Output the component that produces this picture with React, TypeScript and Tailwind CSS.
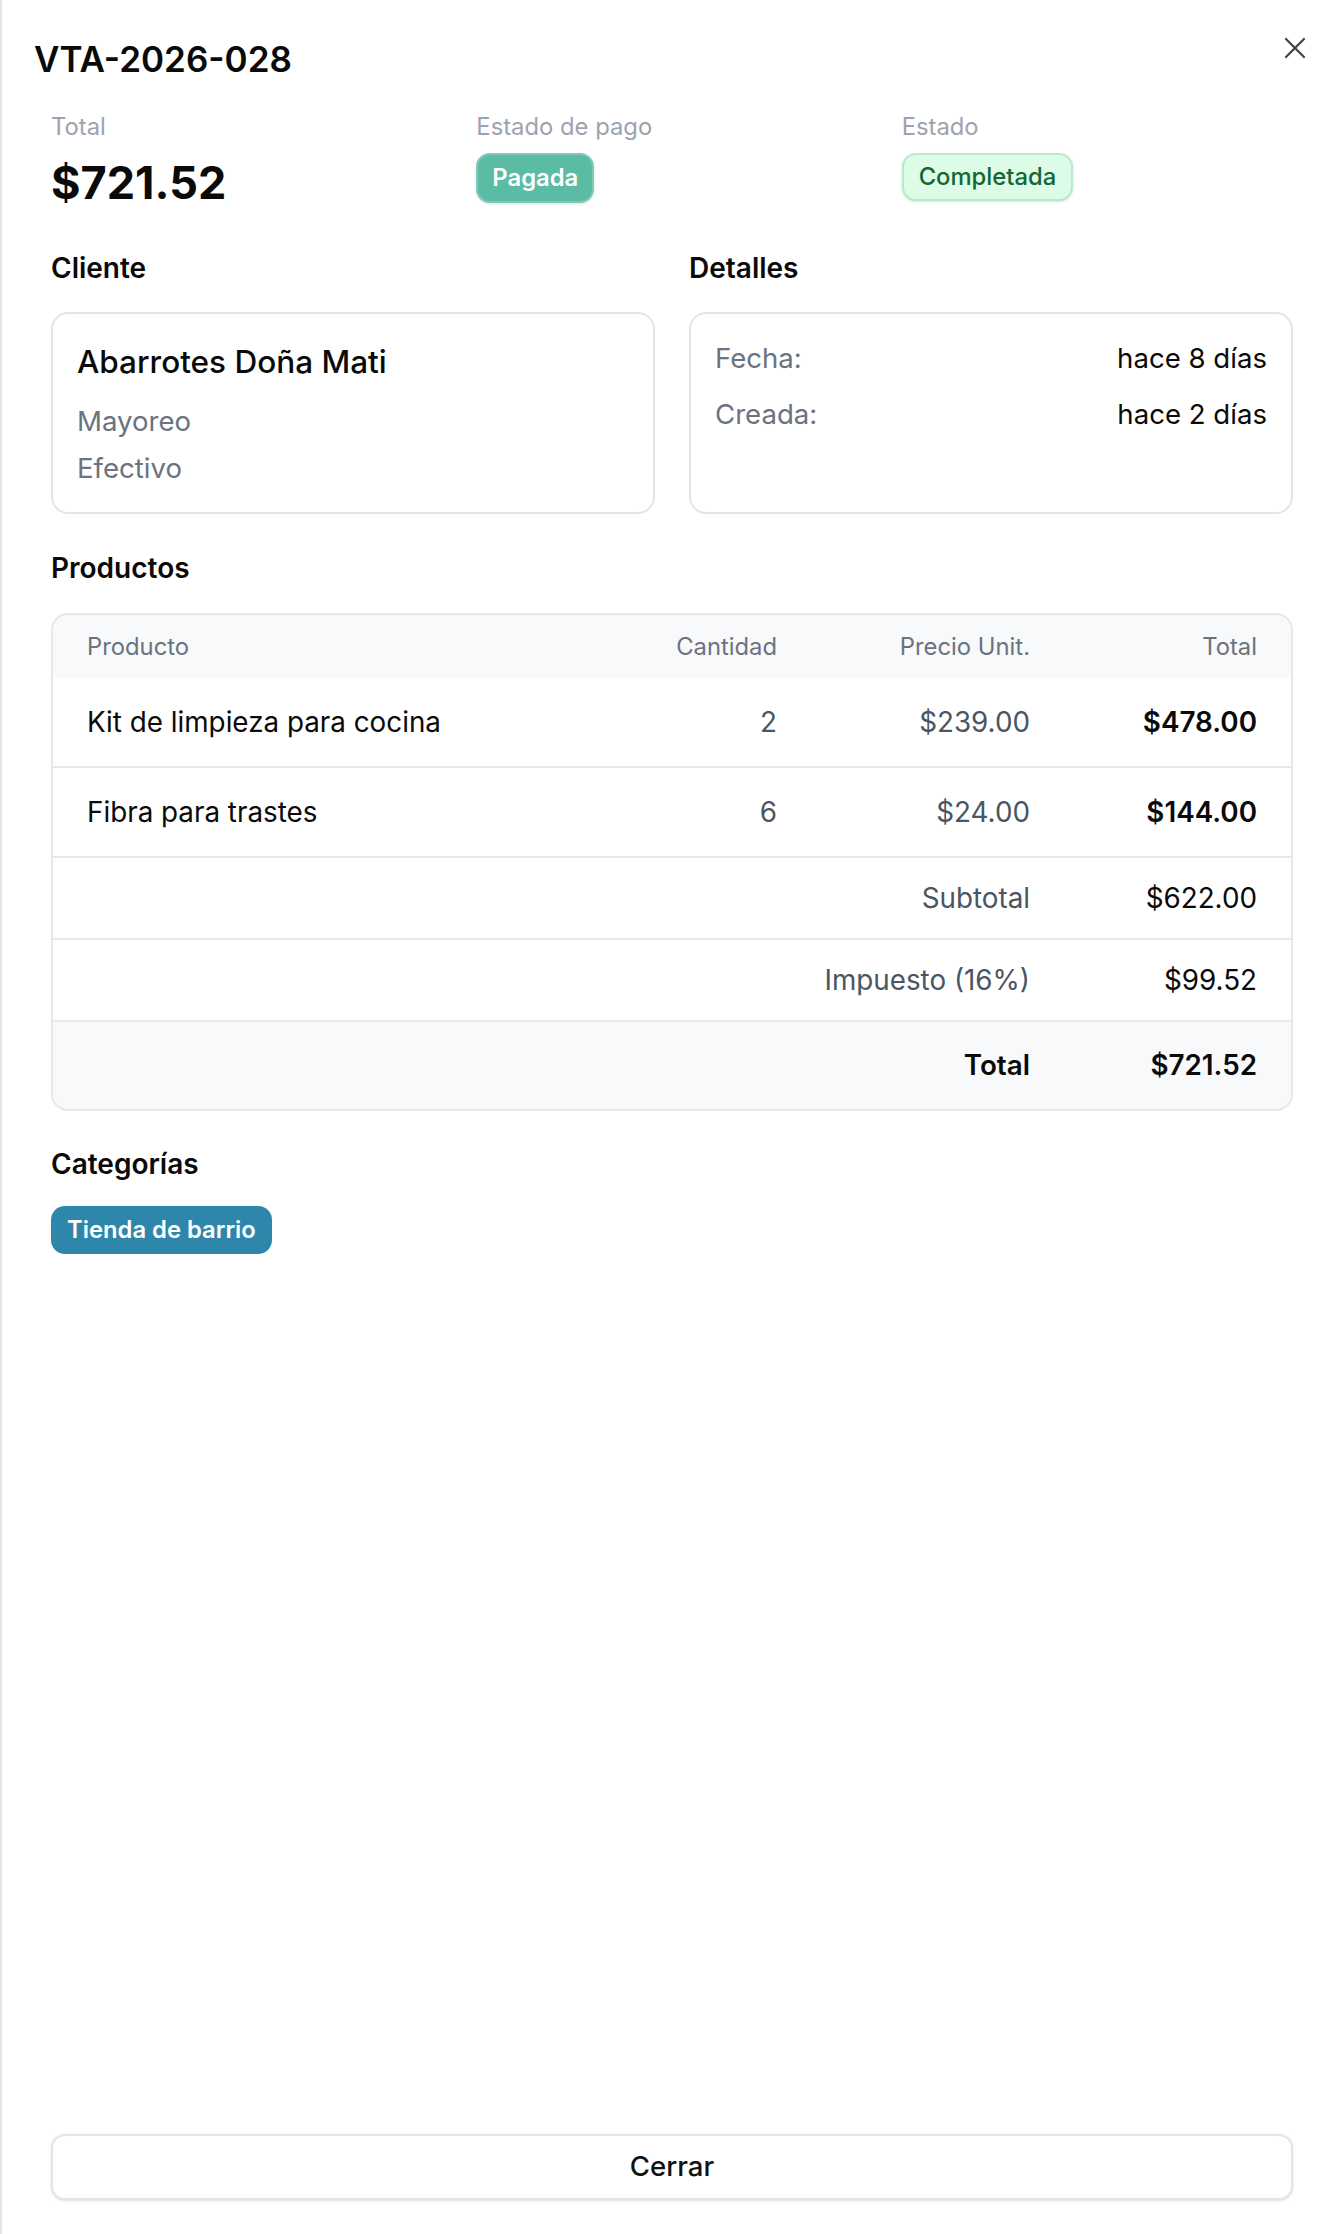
import { X } from 'lucide-react';

const items = [
  { name: 'Kit de limpieza para cocina', qty: 2, price: '$239.00', total: '$478.00' },
  { name: 'Fibra para trastes', qty: 6, price: '$24.00', total: '$144.00' },
];

const font = { fontFamily: 'Inter, "Noto Sans", sans-serif' };

export default function App() {
  return (
    <div
      style={font}
      className="relative flex flex-col h-[2234px] bg-white border-l-2 border-[#e5e5e5] pl-[32px] pr-[34px] text-[#0a0a0a]"
    >
      <button className="absolute top-[30px] right-[31px] text-[#444]">
        <X size={36} strokeWidth={1.5} />
      </button>

      <h2 className="pt-[39px] text-[35px] leading-[41px] font-semibold">VTA-2026-028</h2>

      <div className="flex-1 px-[17px]">
        {/* resumen */}
        <div className="grid grid-cols-3 gap-[34px] mt-[30px]">
          <div>
            <div className="text-[23.8px] leading-[34px] text-[#9ca3af]">Total</div>
            <div className="mt-[11px] text-[45px] leading-[56px] font-bold">$721.52</div>
          </div>
          <div>
            <div className="text-[23.8px] leading-[34px] text-[#9ca3af]">Estado de pago</div>
            <span className="inline-block mt-[9px] px-[14px] py-[6px] rounded-[14px] border-2 border-[#7ccab7] bg-[#5bbba5] text-white text-[23.8px] leading-[34px] font-semibold shadow-sm">
              Pagada
            </span>
          </div>
          <div>
            <div className="text-[23.8px] leading-[34px] text-[#9ca3af]">Estado</div>
            <span className="inline-block mt-[9px] px-[15px] py-[5px] rounded-[14px] border-2 border-[#b5ebc8] bg-[#dcfce7] text-[#166534] text-[23.8px] leading-[34px] font-medium shadow-sm">
              Completada
            </span>
          </div>
        </div>

        {/* cliente y detalles */}
        <div className="grid grid-cols-2 gap-[34px] mt-[37px]">
          <div>
            <h3 className="text-[28px] leading-[41px] font-semibold">Cliente</h3>
            <div className="mt-[23px] h-[202px] rounded-[17px] border-2 border-[#e5e5e5] p-[24px]">
              <div className="text-[31.5px] leading-[47.6px] font-medium">Abarrotes Doña Mati</div>
              <div className="mt-[15px] text-[27.6px] leading-[40.8px] text-[#6b7280]">Mayoreo</div>
              <div className="mt-[7px] text-[27.6px] leading-[40.8px] text-[#6b7280]">Efectivo</div>
            </div>
          </div>
          <div>
            <h3 className="text-[28px] leading-[41px] font-semibold">Detalles</h3>
            <div className="mt-[23px] h-[202px] rounded-[17px] border-2 border-[#e5e5e5] p-[24px] flex flex-col gap-[15px] text-[27.6px] leading-[40.8px]">
              <div className="flex justify-between">
                <span className="text-[#6b7280]">Fecha:</span>
                <span>hace 8 días</span>
              </div>
              <div className="flex justify-between">
                <span className="text-[#6b7280]">Creada:</span>
                <span>hace 2 días</span>
              </div>
            </div>
          </div>
        </div>

        {/* productos */}
        <h3 className="mt-[34px] text-[28px] leading-[41px] font-semibold">Productos</h3>
        <div className="mt-[24px] rounded-[17px] border-2 border-[#e5e7eb] overflow-hidden">
          <table className="w-full table-fixed border-collapse">
            <colgroup>
              <col />
              <col className="w-[170px]" />
              <col className="w-[253px]" />
              <col className="w-[227px]" />
            </colgroup>
            <thead className="bg-[#f8f9fb]">
              <tr className="text-[23.8px] leading-[34px] text-[#6b7280]">
                <th className="px-[34px] py-[14.5px] text-left font-normal">Producto</th>
                <th className="px-[34px] py-[14.5px] text-right font-normal">Cantidad</th>
                <th className="px-[34px] py-[14.5px] text-right font-normal">Precio Unit.</th>
                <th className="px-[34px] py-[14.5px] text-right font-normal">Total</th>
              </tr>
            </thead>
            <tbody className="text-[27.8px] leading-[40.8px]">
              {items.map(it => (
                <tr key={it.name} className="border-b-2 border-[#e5e7eb]">
                  <td className="px-[34px] py-[23.7px] whitespace-nowrap">{it.name}</td>
                  <td className="px-[34px] py-[23.7px] text-right text-[#4b5563]">{it.qty}</td>
                  <td className="px-[34px] py-[23.7px] text-right text-[#4b5563]">{it.price}</td>
                  <td className="px-[34px] py-[23.7px] text-right font-semibold">{it.total}</td>
                </tr>
              ))}
              <tr className="border-b-2 border-[#e5e7eb]">
                <td colSpan={3} className="px-[34px] py-[19.6px] text-right text-[#4b5563]">Subtotal</td>
                <td className="px-[34px] py-[19.6px] text-right">$622.00</td>
              </tr>
              <tr className="border-b-2 border-[#e5e7eb]">
                <td colSpan={3} className="px-[34px] py-[19.6px] text-right text-[#4b5563]">Impuesto (16%)</td>
                <td className="px-[34px] py-[19.6px] text-right">$99.52</td>
              </tr>
              <tr className="bg-[#f8f9fb]">
                <td colSpan={3} className="px-[34px] py-[23px] text-right font-semibold">Total</td>
                <td className="px-[34px] py-[23px] text-right font-semibold">$721.52</td>
              </tr>
            </tbody>
          </table>
        </div>

        {/* categorias */}
        <h3 className="mt-[33px] text-[28px] leading-[41px] font-semibold">Categorías</h3>
        <div className="mt-[21px] flex gap-[14px]">
          <span className="px-[16px] py-[7px] rounded-[14px] bg-[#2e86aa] text-white text-[23.8px] leading-[34px] font-semibold">
            Tienda de barrio
          </span>
        </div>
      </div>

      <div className="px-[17px] pb-[34px]">
        <button className="w-full h-[66px] rounded-[14px] border-2 border-[#e5e5e5] bg-white shadow-sm text-[27.6px] font-medium text-[#111]">
          Cerrar
        </button>
      </div>
    </div>
  );
}
